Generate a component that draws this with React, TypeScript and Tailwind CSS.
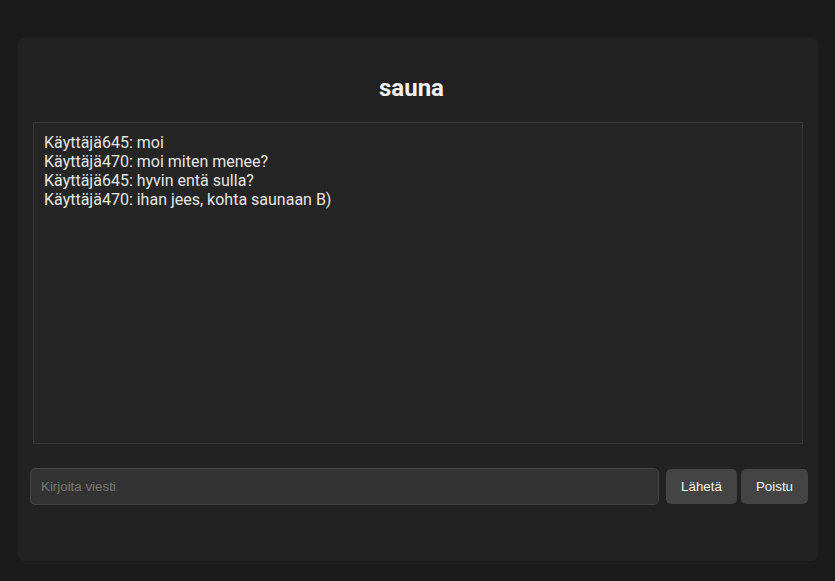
import React from "react";

const messages = [
  "Käyttäjä645: moi",
  "Käyttäjä470: moi miten menee?",
  "Käyttäjä645: hyvin entä sulla?",
  "Käyttäjä470: ihan jees, kohta saunaan B)",
];

export default function App() {
  return (
    <div
      className="w-[835px] h-[581px] bg-[#1b1b1b] pt-[38px] pl-[18px]"
      style={{ fontFamily: "Roboto, 'Liberation Sans', sans-serif" }}
    >
      <div className="w-[800px] h-[523px] bg-[#222222] rounded-[6px] flex flex-col">
        <h1 className="text-[24px] font-bold text-[#f2f2f2] text-center pr-[13px] pt-[36px] leading-[28px]">
          sauna
        </h1>
        <div className="mt-[20px] ml-[15px] w-[770px] h-[322px] border border-[#383838] bg-[#252525] px-[10px] pt-[10px] text-[16px] leading-[19px] text-[#e6e6e6]">
          {messages.map((m, i) => (
            <div key={i}>{m}</div>
          ))}
        </div>
        <div
          className="mt-[24px] ml-[12px] flex items-center"
          style={{ fontFamily: "'Liberation Sans', Arial, sans-serif" }}
        >
          <div className="w-[629px] h-[37px] rounded-[5px] border border-[#444444] bg-[#333333] flex items-center px-[10px]">
            <input
              className="w-full bg-transparent outline-none text-[13.33px] text-[#e6e6e6] placeholder-[#777777]"
              style={{ fontFamily: "'Liberation Sans', Arial, sans-serif" }}
              placeholder="Kirjoita viesti"
            />
          </div>
          <button className="ml-[7px] w-[71px] h-[35px] rounded-[5px] bg-[#444444] text-[13.33px] text-[#f0f0f0]">
            Lähetä
          </button>
          <button className="ml-[4px] w-[67px] h-[35px] rounded-[5px] bg-[#444444] text-[13.33px] text-[#f0f0f0]">
            Poistu
          </button>
        </div>
      </div>
    </div>
  );
}
